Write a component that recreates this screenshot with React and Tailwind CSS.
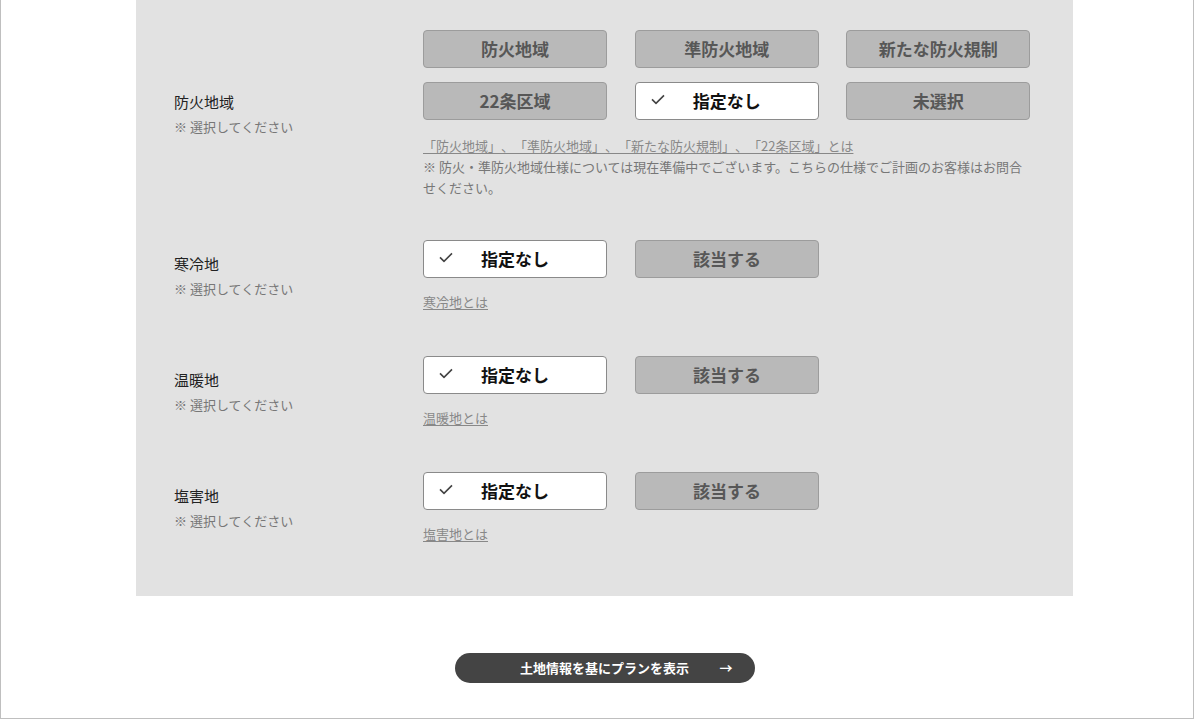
const font = { fontFamily: '"Noto Sans CJK JP", "Noto Sans", sans-serif' }

function Check() {
  return (
    <svg width="14" height="11" viewBox="0 0 14 11" className="absolute left-[15px] top-1/2 -translate-y-[65%]">
      <polyline points="1,5.5 5,9.5 13,1.5" fill="none" stroke="#444" strokeWidth="1.6" />
    </svg>
  )
}

function Option({ label, selected }) {
  if (selected) {
    return (
      <div className="relative flex h-[38px] w-[184px] items-center justify-center rounded-[4px] border border-[#8a8a8a] bg-white text-[17px] font-bold text-[#111]">
        <Check />
        <span>{label}</span>
      </div>
    )
  }
  return (
    <div className="flex h-[38px] w-[184px] items-center justify-center rounded-[4px] border border-[#9c9c9c] bg-[#b9b9b9] text-[17px] font-bold text-[#575757]">
      {label}
    </div>
  )
}

function Label({ title }) {
  return (
    <div className="w-[249px] shrink-0">
      <p className="text-[15px] leading-[22px] text-[#222]">{title}</p>
      <p className="mt-[4px] text-[13px] leading-[20px] text-[#777]">※ 選択してください</p>
    </div>
  )
}

function YesNoRow({ title, link }) {
  return (
    <div className="flex items-center">
      <Label title={title} />
      <div>
        <div className="flex gap-[28px]">
          <Option label="指定なし" selected />
          <Option label="該当する" />
        </div>
        <a className="mt-[14px] block text-[13px] leading-[20px] text-[#888] underline underline-offset-2">{link}</a>
      </div>
    </div>
  )
}

export default function App() {
  return (
    <div style={font} className="h-[719px] w-[1194px] border-x border-b border-[#bfbfbf] bg-white [text-spacing-trim:space-all]">
      <div className="ml-[135px] w-[937px]">
        <div className="bg-[#e2e2e2] pb-[52px] pl-[38px] pt-[30px]">
          <div className="flex items-center">
            <Label title="防火地域" />
            <div className="w-[607px]">
              <div className="grid grid-cols-3 gap-x-[28px] gap-y-[14px]">
                <Option label="防火地域" />
                <Option label="準防火地域" />
                <Option label="新たな防火規制" />
                <Option label="22条区域" />
                <Option label="指定なし" selected />
                <Option label="未選択" />
              </div>
              <div className="mt-[15px] text-[13px] leading-[21px] text-[#777]">
                <a className="underline underline-offset-2 text-[#888]">「防火地域」、「準防火地域」、「新たな防火規制」、「22条区域」とは</a>
                <p>※ 防火・準防火地域仕様については現在準備中でございます。こちらの仕様でご計画のお客様はお問合せください。</p>
              </div>
            </div>
          </div>
          <div className="mt-[42px] flex flex-col gap-[44px]">
            <YesNoRow title="寒冷地" link="寒冷地とは" />
            <YesNoRow title="温暖地" link="温暖地とは" />
            <YesNoRow title="塩害地" link="塩害地とは" />
          </div>
        </div>
        <div className="mt-[57px] flex justify-center">
          <button className="relative flex h-[30px] w-[300px] items-center justify-center rounded-full bg-[#444] text-[13px] font-bold text-white">
            土地情報を基にプランを表示
            <span className="absolute right-[22px] top-1/2 -translate-y-1/2 text-[13px]">→</span>
          </button>
        </div>
      </div>
    </div>
  )
}
